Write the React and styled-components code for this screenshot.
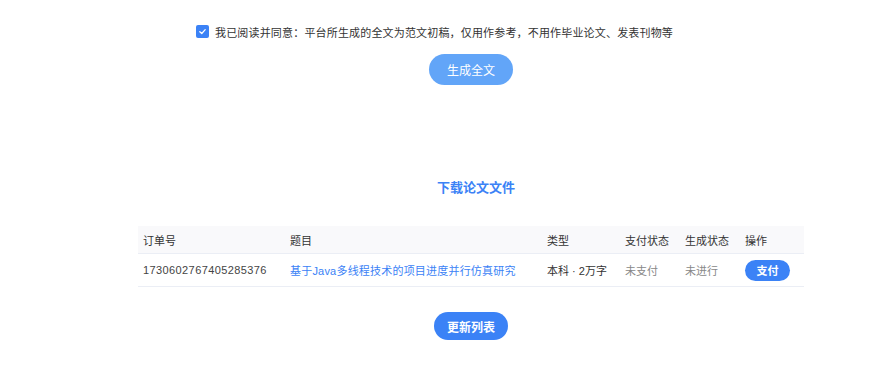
import React from "react";
import styled, { createGlobalStyle } from "styled-components";

const Global = createGlobalStyle`
  html, body { margin: 0; padding: 0; background: #fff; }
  body { font-family: "Liberation Sans", "Noto Sans CJK SC", sans-serif; color: #333; }
`;

const Page = styled.div`
  width: 873px;
  height: 391px;
  display: flex;
  flex-direction: column;
  overflow: hidden;
`;

const AgreeRow = styled.label`
  display: flex;
  align-items: center;
  justify-content: center;
  gap: 6px;
  margin-top: 25px;
  padding-right: 4px;
  font-size: 11px;
  color: #333;
  height: 13px;
  letter-spacing: 0.17px;
`;

const Check = styled.span`
  width: 13px;
  height: 13px;
  border-radius: 2px;
  background: #3b82f6;
  display: inline-flex;
  align-items: center;
  justify-content: center;
`;

const Content = styled.div`
  margin-left: 138px;
  width: 666px;
  display: flex;
  flex-direction: column;
  align-items: center;
`;

const PillButton = styled.button`
  border: none;
  border-radius: 999px;
  color: #fff;
  font-family: inherit;
  cursor: pointer;
  padding: 0;
  width: ${(p) => p.$w}px;
  height: ${(p) => p.$h}px;
  background: ${(p) => p.$bg || "#3b82f6"};
  font-size: ${(p) => p.$fs || 12}px;
  font-weight: ${(p) => p.$fw || 400};
  margin-top: ${(p) => p.$mt || 0}px;
`;

const Title = styled.h3`
  margin: 94px 0 0;
  font-size: 13px;
  font-weight: 700;
  color: #3b82f6;
  line-height: 18px;
  padding-left: 10px;
`;

const Table = styled.div`
  width: 666px;
  margin-top: 29px;
  font-size: 11px;
`;

const Row = styled.div`
  display: grid;
  grid-template-columns: 147px 257px 78px 60px 60px 64px;
  align-items: center;
  height: ${(p) => (p.$head ? 28 : 33)}px;
  background: ${(p) => (p.$head ? "#f9f9fb" : "#fff")};
  border-bottom: 1px solid #ebeef5;
  box-sizing: border-box;
`;

const Cell = styled.div`
  padding-left: 5px;
  white-space: nowrap;
  color: ${(p) => p.$color || "#333"};
  letter-spacing: ${(p) => p.$ls || 0}px;
`;

const Checkmark = () => (
  <svg width="9" height="9" viewBox="0 0 10 10">
    <path d="M2 5.2 L4.2 7.2 L8 3" fill="none" stroke="#fff" strokeWidth="1.4" strokeLinecap="round" strokeLinejoin="round" />
  </svg>
);

export default function App() {
  return (
    <>
      <Global />
      <Page>
        <AgreeRow>
          <Check><Checkmark /></Check>
          <span>我已阅读并同意：平台所生成的全文为范文初稿，仅用作参考，不用作毕业论文、发表刊物等</span>
        </AgreeRow>
        <Content>
          <PillButton $w={84} $h={31} $bg="#62a5f8" $mt={16}>生成全文</PillButton>
          <Title>下载论文文件</Title>
          <Table>
            <Row $head>
              <Cell>订单号</Cell>
              <Cell>题目</Cell>
              <Cell>类型</Cell>
              <Cell>支付状态</Cell>
              <Cell>生成状态</Cell>
              <Cell>操作</Cell>
            </Row>
            <Row>
              <Cell $color="#444" $ls={0.4}>1730602767405285376</Cell>
              <Cell $color="#3b82f6" $ls={0.2}>基于Java多线程技术的项目进度并行仿真研究</Cell>
              <Cell>本科 · 2万字</Cell>
              <Cell $color="#888">未支付</Cell>
              <Cell $color="#888">未进行</Cell>
              <Cell>
                <PillButton $w={45} $h={21} $fs={11} $fw={700}>支付</PillButton>
              </Cell>
            </Row>
          </Table>
          <PillButton $w={74} $h={28} $fw={700} $mt={25}>更新列表</PillButton>
        </Content>
      </Page>
    </>
  );
}
